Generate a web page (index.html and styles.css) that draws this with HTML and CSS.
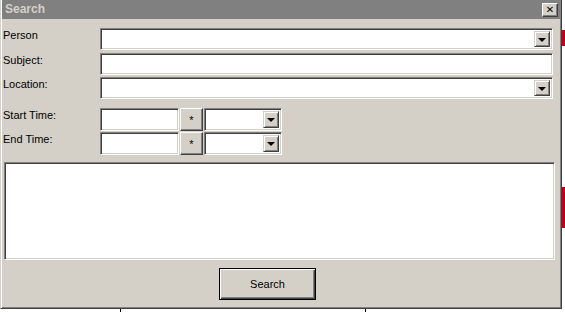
FILE: index.html
```html
<!DOCTYPE html>
<html lang="en">
  <head>
    <title>Search</title>
    <link rel="stylesheet" href="styles.css">
  </head>
  <body>
    <div class="backdrop">
      <span class="mark red m1"></span>
      <span class="mark red m2"></span>
      <span class="mark tick t1"></span>
      <span class="mark tick t2"></span>
    </div>
    <div class="window">
      <div class="titlebar">
        <span class="title">Search</span>
        <span class="close"><span class="x">&#x2715;</span></span>
      </div>
      <div class="content">
        <div class="form">
          <label class="r-person">Person</label>
          <div class="field combo r-person"><span class="drop"><i></i></span></div>
          <label class="r-subject">Subject:</label>
          <div class="field r-subject"></div>
          <label class="r-location">Location:</label>
          <div class="field combo r-location"><span class="drop"><i></i></span></div>
          <label class="r-start">Start Time:</label>
          <div class="timerow r-start">
            <div class="field date"></div>
            <span class="btn star">*</span>
            <div class="field combo hour"><span class="drop"><i></i></span></div>
          </div>
          <label class="r-end">End Time:</label>
          <div class="timerow r-end">
            <div class="field date"></div>
            <span class="btn star">*</span>
            <div class="field combo hour"><span class="drop"><i></i></span></div>
          </div>
        </div>
        <div class="field results"></div>
        <div class="actions">
          <span class="btn default">Search</span>
        </div>
      </div>
    </div>
  </body>
</html>
```

FILE: styles.css
```css
html, body {margin:0;padding:0;background:#fff}
body {position:relative;width:565px;height:312px;overflow:hidden;font:11px/13px "Liberation Sans", Arial, sans-serif;color:#000}

.backdrop {position:absolute;left:0;top:0;width:565px;height:312px}
.mark {position:absolute;display:block}
.red {background:#c00018;left:562px;width:3px}
.m1 {top:30px;height:16px}
.m2 {top:187px;height:41px}
.tick {background:#000;width:1px;top:309px;height:3px}
.t1 {left:120px}
.t2 {left:365px}

.window {position:relative;box-sizing:border-box;width:562px;height:309px;background:#d4d0c8;
  border-style:solid;border-width:0 1px 1px 1px;border-color:#404040 #404040 #404040 #d4d0c8;
  box-shadow:inset 1px 0 #fff, inset -1px -1px #808080;padding:0 1px 1px 1px;display:flex;flex-direction:column}

.titlebar {height:19px;background:#808080;display:flex;align-items:center;justify-content:space-between;padding:0 2px 0 3px}
.title {color:#d4d0c8;font-weight:bold;font-size:12px}
.close {box-sizing:border-box;width:16px;height:14px;background:#d4d0c8;display:flex;align-items:center;justify-content:center;
  border-style:solid;border-width:1px;border-color:#fff #404040 #404040 #fff;box-shadow:inset -1px -1px #808080}
.close .x {font:bold 10px/10px "DejaVu Sans", sans-serif;color:#000}

.content {display:flex;flex-direction:column}

.form {display:grid;grid-template-columns:98px 453px;margin-top:9px}
.form label {padding:1px 0 0 1px}
.r-person {margin-bottom:3px}
.r-subject {margin-bottom:2px}
.r-location {margin-bottom:9px}
.r-start {margin-bottom:1px}

.field {box-sizing:border-box;height:22px;background:#fff;position:relative;
  border-style:solid;border-width:1px;border-color:#808080 #fff #fff #808080;box-shadow:inset 1px 1px #404040, inset -1px -1px #d4d0c8}

.drop {position:absolute;right:2px;top:2px;bottom:2px;width:16px;box-sizing:border-box;background:#d4d0c8;
  border-style:solid;border-width:1px;border-color:#d4d0c8 #404040 #404040 #d4d0c8;box-shadow:inset 1px 1px #fff, inset -1px -1px #808080;
  display:flex;align-items:center;justify-content:center}
.drop i {display:block;width:0;height:0;border-style:solid;border-width:4px 4px 0 4px;border-color:#000 transparent transparent transparent;margin-top:1px}

.timerow {display:flex;align-items:stretch;height:23px}
.timerow .field {height:23px}
.date {width:79px}
.hour {width:78px;margin-left:1px}

.btn {box-sizing:border-box;background:#d4d0c8;display:flex;align-items:center;justify-content:center;
  border-style:solid;border-width:1px;border-color:#fff #404040 #404040 #fff;box-shadow:inset -1px -1px #808080}
.star {width:23px;margin-left:1px;font-size:11px;padding-top:2px}

.results {height:98px;width:551px;margin:7px 0 0 2px}

.actions {display:flex;padding:8px 0 0 217px}
.default {width:97px;height:32px;border:1px solid #000;box-shadow:inset 1px 1px #fff, inset -1px -1px #404040, inset -2px -2px #808080;font-size:11px}
```
